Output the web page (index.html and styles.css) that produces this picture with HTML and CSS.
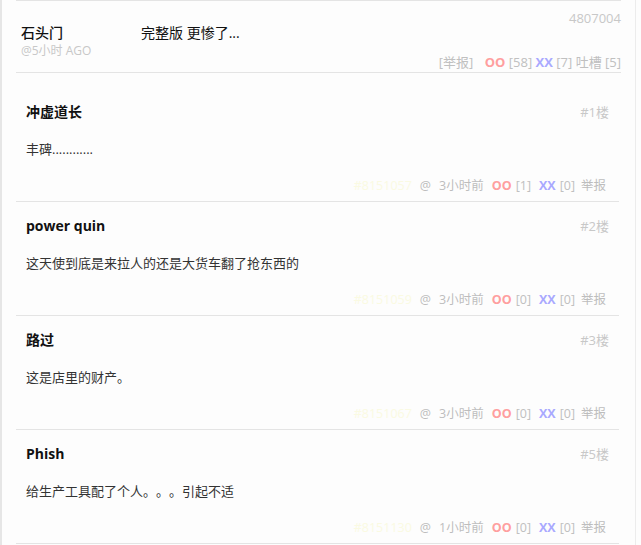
FILE: index.html
```html
<!DOCTYPE html>
<html lang="zh-CN">
<head>
  <meta charset="UTF-8">
  <title>石头门 - 吐槽</title>
  <link rel="stylesheet" href="styles.css">
</head>
<body>

  <div class="page">
    <div class="post">
      <div class="post-id">4807004</div>
      <div class="post-row">
        <div class="post-author">
          <div class="author-name">石头门</div>
          <div class="author-time">@5小时 AGO</div>
        </div>
        <div class="post-text">完整版 更惨了...</div>
      </div>
      <div class="post-actions">
        <span class="report">[举报]</span>
        <span class="oo">OO</span> <span class="count">[58]</span>
        <span class="xx">XX</span> <span class="count">[7]</span>
        <span class="count">吐槽 [5]</span>
      </div>
    </div>

    <div class="comments">
      <div class="comment">
        <div class="comment-head">
          <span class="comment-name">冲虚道长</span>
          <span class="floor">#1楼</span>
        </div>
        <div class="comment-text">丰碑............</div>
        <div class="comment-foot">
          <span class="cid">#8151057</span>
          <span class="at">@</span>
          <span class="when">3小时前</span>
          <span class="oo">OO</span><span class="count">[1]</span>
          <span class="xx">XX</span><span class="count">[0]</span>
          <span class="report">举报</span>
        </div>
      </div>

      <div class="comment">
        <div class="comment-head">
          <span class="comment-name">power quin</span>
          <span class="floor">#2楼</span>
        </div>
        <div class="comment-text">这天使到底是来拉人的还是大货车翻了抢东西的</div>
        <div class="comment-foot">
          <span class="cid">#8151059</span>
          <span class="at">@</span>
          <span class="when">3小时前</span>
          <span class="oo">OO</span><span class="count">[0]</span>
          <span class="xx">XX</span><span class="count">[0]</span>
          <span class="report">举报</span>
        </div>
      </div>

      <div class="comment">
        <div class="comment-head">
          <span class="comment-name">路过</span>
          <span class="floor">#3楼</span>
        </div>
        <div class="comment-text">这是店里的财产。</div>
        <div class="comment-foot">
          <span class="cid">#8151067</span>
          <span class="at">@</span>
          <span class="when">3小时前</span>
          <span class="oo">OO</span><span class="count">[0]</span>
          <span class="xx">XX</span><span class="count">[0]</span>
          <span class="report">举报</span>
        </div>
      </div>

      <div class="comment">
        <div class="comment-head">
          <span class="comment-name">Phish</span>
          <span class="floor">#5楼</span>
        </div>
        <div class="comment-text">给生产工具配了个人。。。引起不适</div>
        <div class="comment-foot">
          <span class="cid">#8151130</span>
          <span class="at">@</span>
          <span class="when">1小时前</span>
          <span class="oo">OO</span><span class="count">[0]</span>
          <span class="xx">XX</span><span class="count">[0]</span>
          <span class="report">举报</span>
        </div>
      </div>
    </div>
  </div>

</body>
</html>
```

FILE: styles.css
```css
body {
  margin: 0;
  background: #fdfdfd;
  font-family: 'Open Sans', 'Noto Sans CJK SC', sans-serif;
  color: #333;
  text-spacing-trim: space-all;
}

.page {
  width: 633px;
  height: 545px;
  border-left: 2px solid #e6e6e6;
  border-right: 1px solid #ececec;
  overflow: hidden;
}

.post {
  margin: 0 14px;
  border-top: 1px solid #e4e4e4;
  border-bottom: 1px solid #e4e4e4;
  padding: 8px 0 2px;
}

.post-id {
  text-align: right;
  font-size: 13px;
  line-height: 18px;
  color: #c8c8c8;
}

.post-row {
  display: flex;
  margin-top: -2px;
}

.post-author {
  width: 120px;
  padding-left: 5px;
}

.author-name {
  font-size: 14px;
  line-height: 16px;
  color: #111;
  font-weight: 500;
}

.author-time {
  font-size: 12px;
  line-height: 20px;
  color: #c8c8c8;
}

.post-text {
  font-size: 14px;
  line-height: 16px;
  color: #111;
}

.post-actions {
  text-align: right;
  font-size: 13px;
  line-height: 16px;
  margin-top: -7px;
  color: #c0c0c0;
}

.post-actions .report {
  margin-right: 8px;
}

.comments {
  padding-top: 15px;
}

.comment {
  margin: 0 16px 0 14px;
  padding: 14px 10px 5px;
  border-bottom: 1px solid #e4e4e4;
}

.comment-head {
  display: flex;
  justify-content: space-between;
  line-height: 20px;
}

.comment-name {
  font-size: 14px;
  font-weight: bold;
  color: #111;
}

.floor {
  font-size: 13px;
  color: #c8c8c8;
}

.comment-text {
  margin-top: 17px;
  font-size: 13px;
  line-height: 20px;
  color: #333;
}

.comment-foot {
  margin-top: 17px;
  display: flex;
  justify-content: flex-end;
  align-items: baseline;
  padding-right: 3px;
  font-size: 12.5px;
  line-height: 20px;
  color: #bdbdbd;
}

.comment-foot span {
  margin-left: 8px;
}

.comment-foot .count {
  margin-left: 4px;
}

.comment-foot .report {
  margin-left: 6px;
}

.cid {
  color: #fafae2;
}

.oo {
  color: #ff9f9f;
  font-weight: bold;
}

.xx {
  color: #a9a9ff;
  font-weight: bold;
}

.count {
  color: #c0c0c0;
}
```
